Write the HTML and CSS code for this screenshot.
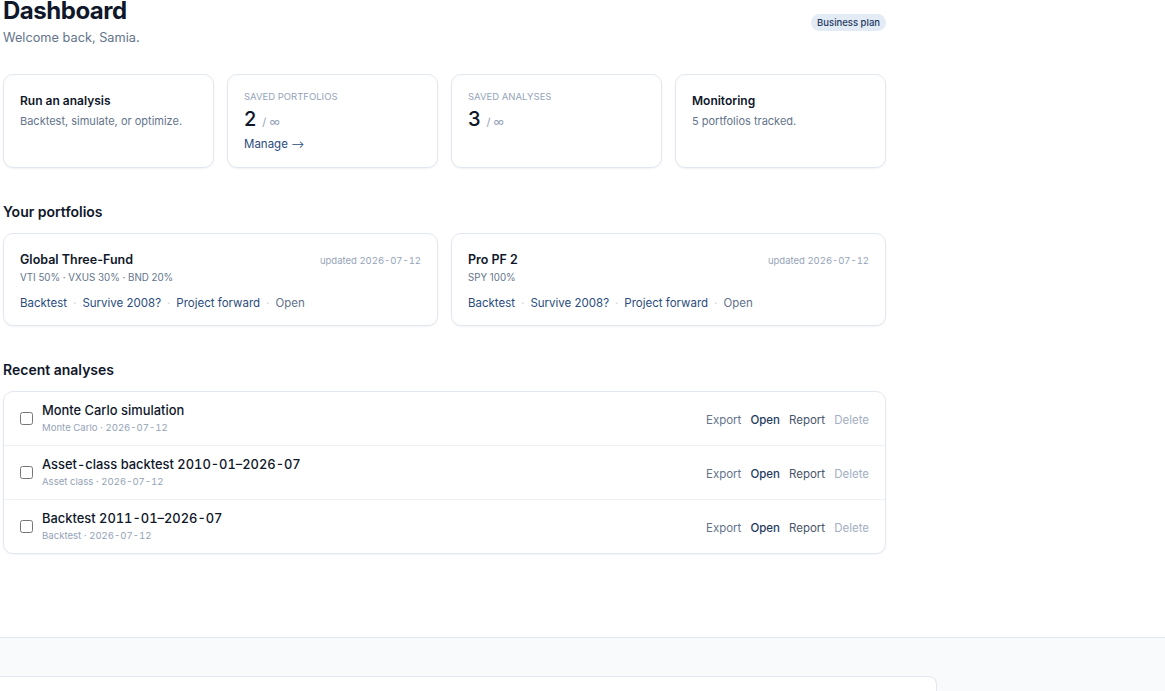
FILE: index.html
```html
<!DOCTYPE html>
<html lang="en">
<head>
<meta charset="utf-8">
<title>Dashboard</title>
<link rel="stylesheet" href="styles.css">
</head>
<body>
<main class="page">
  <header class="head">
    <div>
      <h1>Dashboard</h1>
      <p class="sub">Welcome back, Samia.</p>
    </div>
    <span class="badge">Business plan</span>
  </header>

  <section class="stats">
    <div class="card stat">
      <div class="card-title">Run an analysis</div>
      <div class="card-text">Backtest, simulate, or optimize.</div>
    </div>
    <div class="card stat">
      <div class="label">Saved portfolios</div>
      <div class="count">2<small>/ ∞</small></div>
      <a class="manage" href="#">Manage <span class="arrow">⟶</span></a>
    </div>
    <div class="card stat">
      <div class="label">Saved analyses</div>
      <div class="count">3<small>/ ∞</small></div>
    </div>
    <div class="card stat">
      <div class="card-title">Monitoring</div>
      <div class="card-text">5 portfolios tracked.</div>
    </div>
  </section>

  <h2>Your portfolios</h2>
  <section class="portfolios">
    <div class="card pf">
      <div class="pf-head">
        <span class="pf-name">Global Three-Fund</span>
        <span class="pf-date">updated 2026-07-12</span>
      </div>
      <div class="pf-alloc">VTI 50% · VXUS 30% · BND 20%</div>
      <div class="pf-links">
        <a href="#">Backtest</a><span class="dot">·</span><a href="#">Survive 2008?</a><span class="dot">·</span><a href="#">Project forward</a><span class="dot">·</span><a href="#" class="muted">Open</a>
      </div>
    </div>
    <div class="card pf">
      <div class="pf-head">
        <span class="pf-name">Pro PF 2</span>
        <span class="pf-date">updated 2026-07-12</span>
      </div>
      <div class="pf-alloc">SPY 100%</div>
      <div class="pf-links">
        <a href="#">Backtest</a><span class="dot">·</span><a href="#">Survive 2008?</a><span class="dot">·</span><a href="#">Project forward</a><span class="dot">·</span><a href="#" class="muted">Open</a>
      </div>
    </div>
  </section>

  <h2>Recent analyses</h2>
  <section class="card table">
    <div class="row">
      <input type="checkbox" class="check">
      <div class="an">
        <div class="an-title">Monte Carlo simulation</div>
        <div class="an-meta">Monte Carlo · 2026-07-12</div>
      </div>
      <div class="actions">
        <a href="#" class="export">Export</a><a href="#" class="open">Open</a><a href="#" class="report">Report</a><a href="#" class="delete">Delete</a>
      </div>
    </div>
    <div class="row">
      <input type="checkbox" class="check">
      <div class="an">
        <div class="an-title">Asset-class backtest 2010-01–2026-07</div>
        <div class="an-meta">Asset class · 2026-07-12</div>
      </div>
      <div class="actions">
        <a href="#" class="export">Export</a><a href="#" class="open">Open</a><a href="#" class="report">Report</a><a href="#" class="delete">Delete</a>
      </div>
    </div>
    <div class="row">
      <input type="checkbox" class="check">
      <div class="an">
        <div class="an-title">Backtest 2011-01–2026-07</div>
        <div class="an-meta">Backtest · 2026-07-12</div>
      </div>
      <div class="actions">
        <a href="#" class="export">Export</a><a href="#" class="open">Open</a><a href="#" class="report">Report</a><a href="#" class="delete">Delete</a>
      </div>
    </div>
  </section>
</main>

<footer class="footer">
  <div class="footer-panel"></div>
</footer>
</body>
</html>
```

FILE: styles.css
```css
html, body {
  overflow: hidden;
}

body {
  margin: 0;
  font-family: Inter, "Noto Sans", sans-serif;
  color: #0f172a;
  background: #ffffff;
}

a {
  text-decoration: none;
}

.page {
  width: 883px;
  margin: -5px 0 0 3px;
}

.head {
  display: flex;
  justify-content: space-between;
  align-items: center;
}

h1 {
  margin: 0;
  font-size: 24px;
  line-height: 32px;
  font-weight: 700;
  letter-spacing: -0.02em;
  color: #0f172a;
}

.sub {
  margin: 1px 0 0;
  font-size: 12.75px;
  line-height: 20px;
  color: #64748b;
}

.badge {
  margin-top: 2px;
  font-size: 9.5px;
  line-height: 17px;
  padding: 0 6px;
  border-radius: 9px;
  background: #e3ebf5;
  color: #1e3a5f;
  font-weight: 500;
}

.card {
  box-sizing: border-box;
  border: 1px solid #e2e8f0;
  border-radius: 10px;
  background: #ffffff;
  box-shadow: 0 1px 2px rgba(15, 23, 42, 0.05);
  padding: 16px;
}

.stats {
  display: grid;
  grid-template-columns: repeat(4, 1fr);
  gap: 13px;
  margin-top: 26px;
}

.stat {
  height: 94px;
  padding-top: 17px;
}

.card-title {
  font-size: 12px;
  line-height: 18px;
  font-weight: 600;
}

.card-text {
  margin-top: 3px;
  font-size: 11px;
  line-height: 16px;
  color: #64748b;
}

.label {
  margin-top: -1px;
  font-size: 9.5px;
  line-height: 11px;
  color: #94a3b8;
  text-transform: uppercase;
}

.count {
  margin-top: 5px;
  font-size: 20px;
  line-height: 24px;
  font-weight: 500;
}

.count small {
  margin-left: 6px;
  font-size: 11px;
  line-height: 1;
  font-weight: 400;
  color: #94a3b8;
}

.manage {
  display: block;
  margin-top: 5px;
  font-size: 11.5px;
  line-height: 16px;
  color: #2b4c7e;
}

.arrow {
  font-size: 10px;
  line-height: 1;
}

h2 {
  margin: 34px 0 11px;
  font-size: 14px;
  line-height: 20px;
  font-weight: 600;
  color: #0f172a;
}

.portfolios {
  display: grid;
  grid-template-columns: 1fr 1fr;
  gap: 13px;
}

.pf {
  height: 93px;
  padding-top: 17px;
}

.pf-head {
  display: flex;
  justify-content: space-between;
  align-items: baseline;
}

.pf-name {
  font-size: 12.5px;
  line-height: 18px;
  font-weight: 600;
}

.pf-date {
  font-size: 9.5px;
  color: #94a3b8;
  font-variant-numeric: tabular-nums;
}

.pf-alloc {
  margin-top: 2px;
  font-size: 9.75px;
  line-height: 14px;
  color: #64748b;
}

.pf-links {
  margin-top: 10px;
  font-size: 11.5px;
  line-height: 16px;
}

.pf-links a {
  color: #2b4c7e;
}

.pf-links a.muted {
  color: #64748b;
}

.dot {
  margin: 0 6px;
  color: #cbd5e1;
}

.table {
  padding: 0;
}

.row {
  display: flex;
  align-items: center;
  padding: 10px 16px;
}

.row + .row {
  border-top: 1px solid #eef1f5;
}

.check {
  width: 13px;
  height: 13px;
  margin: 0 9px 0 0;
}

.an {
  flex: 1;
}

.an-title {
  font-size: 12.9px;
  line-height: 18px;
  font-weight: 500;
  color: #0f172a;
  font-variant-numeric: tabular-nums;
}

.an-meta {
  margin-top: 1px;
  font-size: 9.6px;
  line-height: 14px;
  color: #94a3b8;
  font-variant-numeric: tabular-nums;
}

.actions {
  display: flex;
  gap: 9px;
  font-size: 11.5px;
  line-height: 16px;
  margin-top: 3px;
}

.actions .export { color: #64748b; }
.actions .open { color: #1e3a5f; font-weight: 500; }
.actions .report { color: #475569; }
.actions .delete { color: #a3afc2; }

.footer {
  margin-top: 83px;
  border-top: 1px solid #e2e8f0;
  background: #f8fafc;
  padding-top: 38px;
  height: 80px;
}

.footer-panel {
  width: 936px;
  height: 60px;
  background: #ffffff;
  border-top: 1px solid #e2e8f0;
  border-right: 1px solid #e2e8f0;
  border-top-right-radius: 8px;
}
```
